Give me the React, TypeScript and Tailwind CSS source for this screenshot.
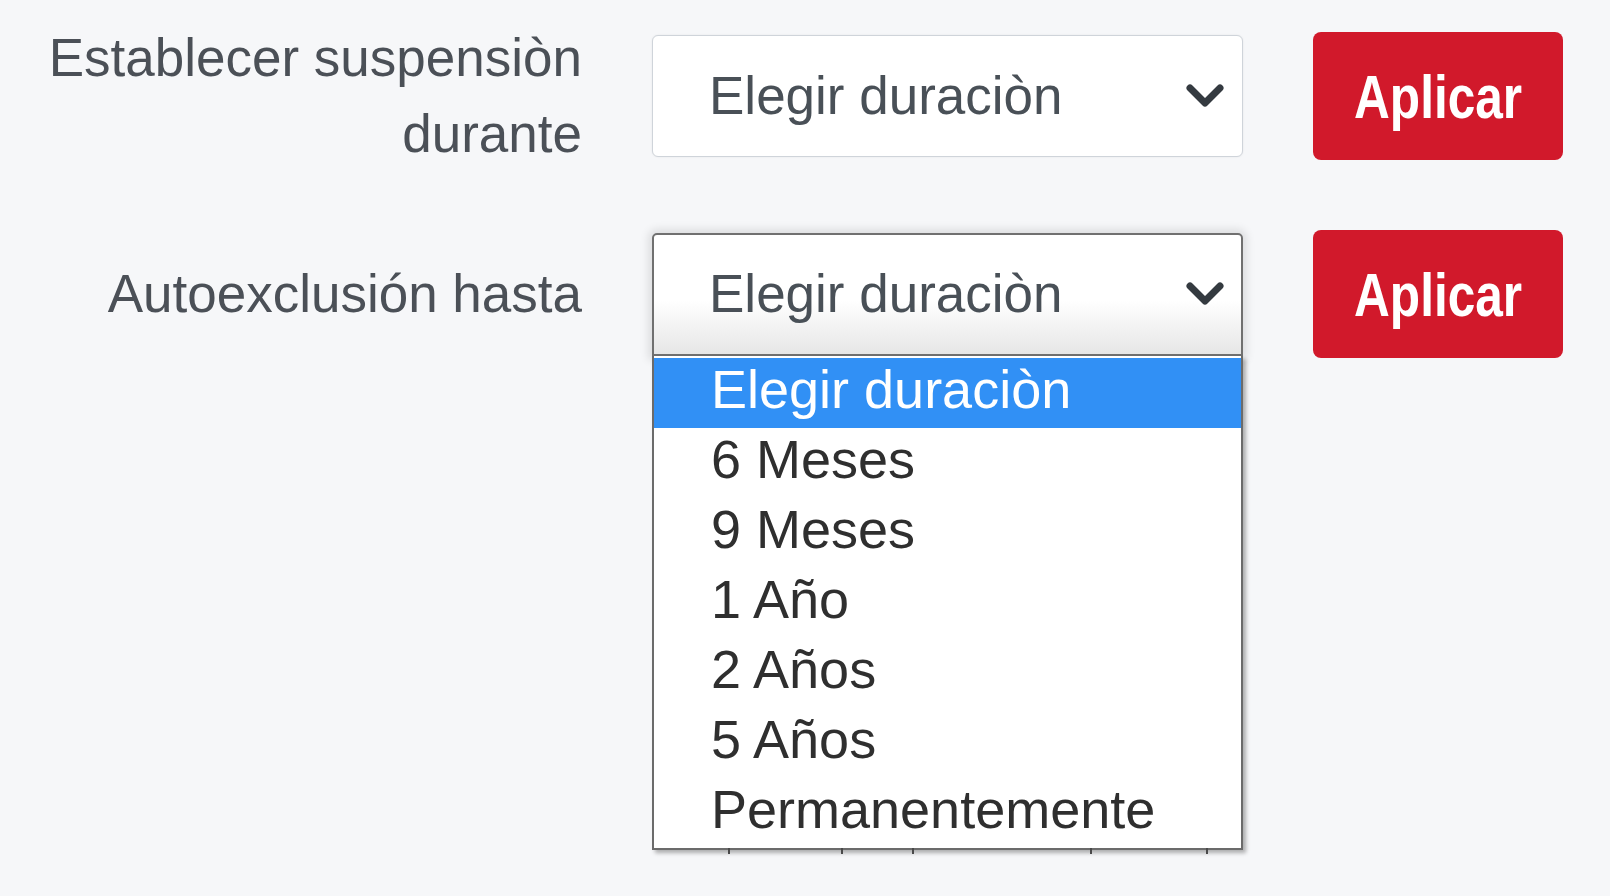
const OPTIONS = ['Elegir duraciòn', '6 Meses', '9 Meses', '1 Año', '2 Años', '5 Años', 'Permanentemente'];

// little marks of the page under the open list
const TICKS = ['left-[74px]', 'left-[187px]', 'left-[258px]', 'left-[436px]', 'left-[552px]'];

function Chevron() {
  return (
    <svg width="40" height="26" viewBox="0 0 40 26" fill="none" className="shrink-0">
      <path d="M5 5 L20 20 L35 5" stroke="#343a40" strokeWidth="7" strokeLinecap="round" strokeLinejoin="round" />
    </svg>
  );
}

function ApplyButton() {
  return (
    <button className="ml-[70px] w-[250px] h-[128px] rounded-[8px] bg-[#d1192b] text-white font-bold text-[62px] flex items-center justify-center">
      <span className="inline-block scale-x-[0.8]">Aplicar</span>
    </button>
  );
}

export default function App() {
  return (
    <div className="min-h-screen w-full bg-[#f6f7f9] pt-[20px] font-['Liberation_Sans',Arial,sans-serif]">
      {/* Suspensión */}
      <div className="flex items-center h-[152px]">
        <label className="w-[582px] shrink-0 text-right text-[53px] leading-[76px] text-[#4b5057]">
          Establecer suspensiòn durante
        </label>
        <div className="ml-[70px] w-[591px] h-[122px] bg-white border border-[#cfd4da] rounded-[6px] shadow-[0_0_2px_rgba(0,0,0,0.08)] flex items-center justify-between pl-[56px] pr-[17px] text-[53px] text-[#495057]">
          <span>Elegir duraciòn</span>
          <Chevron />
        </div>
        <ApplyButton />
      </div>

      {/* Autoexclusión */}
      <div className="flex items-center h-[128px] mt-[58px]">
        <label className="w-[582px] shrink-0 text-right text-[53px] text-[#4b5057]">Autoexclusión hasta</label>
        <div className="relative ml-[70px] w-[591px]">
          <div className="h-[123px] border-2 border-[#707070] rounded-t-[5px] bg-[linear-gradient(to_bottom,#ffffff_55%,#e6e6e6)] shadow-[0_0_8px_4px_rgba(0,0,0,0.1)] flex items-center justify-between pl-[55px] pr-[16px] text-[53px] text-[#495057]">
            <span>Elegir duraciòn</span>
            <Chevron />
          </div>
          <div className="absolute top-full left-0 w-full z-10 bg-white border-x-2 border-b-2 border-[#6b6b6b] pt-[2px] shadow-[3px_3px_4px_rgba(0,0,0,0.3)]">
            {OPTIONS.map((o, i) => (
              <div
                key={o}
                className={`h-[70px] pl-[57px] text-[54px] leading-[62px] ${i === 0 ? 'bg-[#3190f5] text-white' : 'text-[#2f2f2f]'}`}
              >
                {o}
              </div>
            ))}
            {TICKS.map((t) => (
              <div key={t} className={`absolute top-full ${t} w-[2px] h-[6px] bg-[#4a4a4a]`} />
            ))}
          </div>
        </div>
        <ApplyButton />
      </div>
    </div>
  );
}
